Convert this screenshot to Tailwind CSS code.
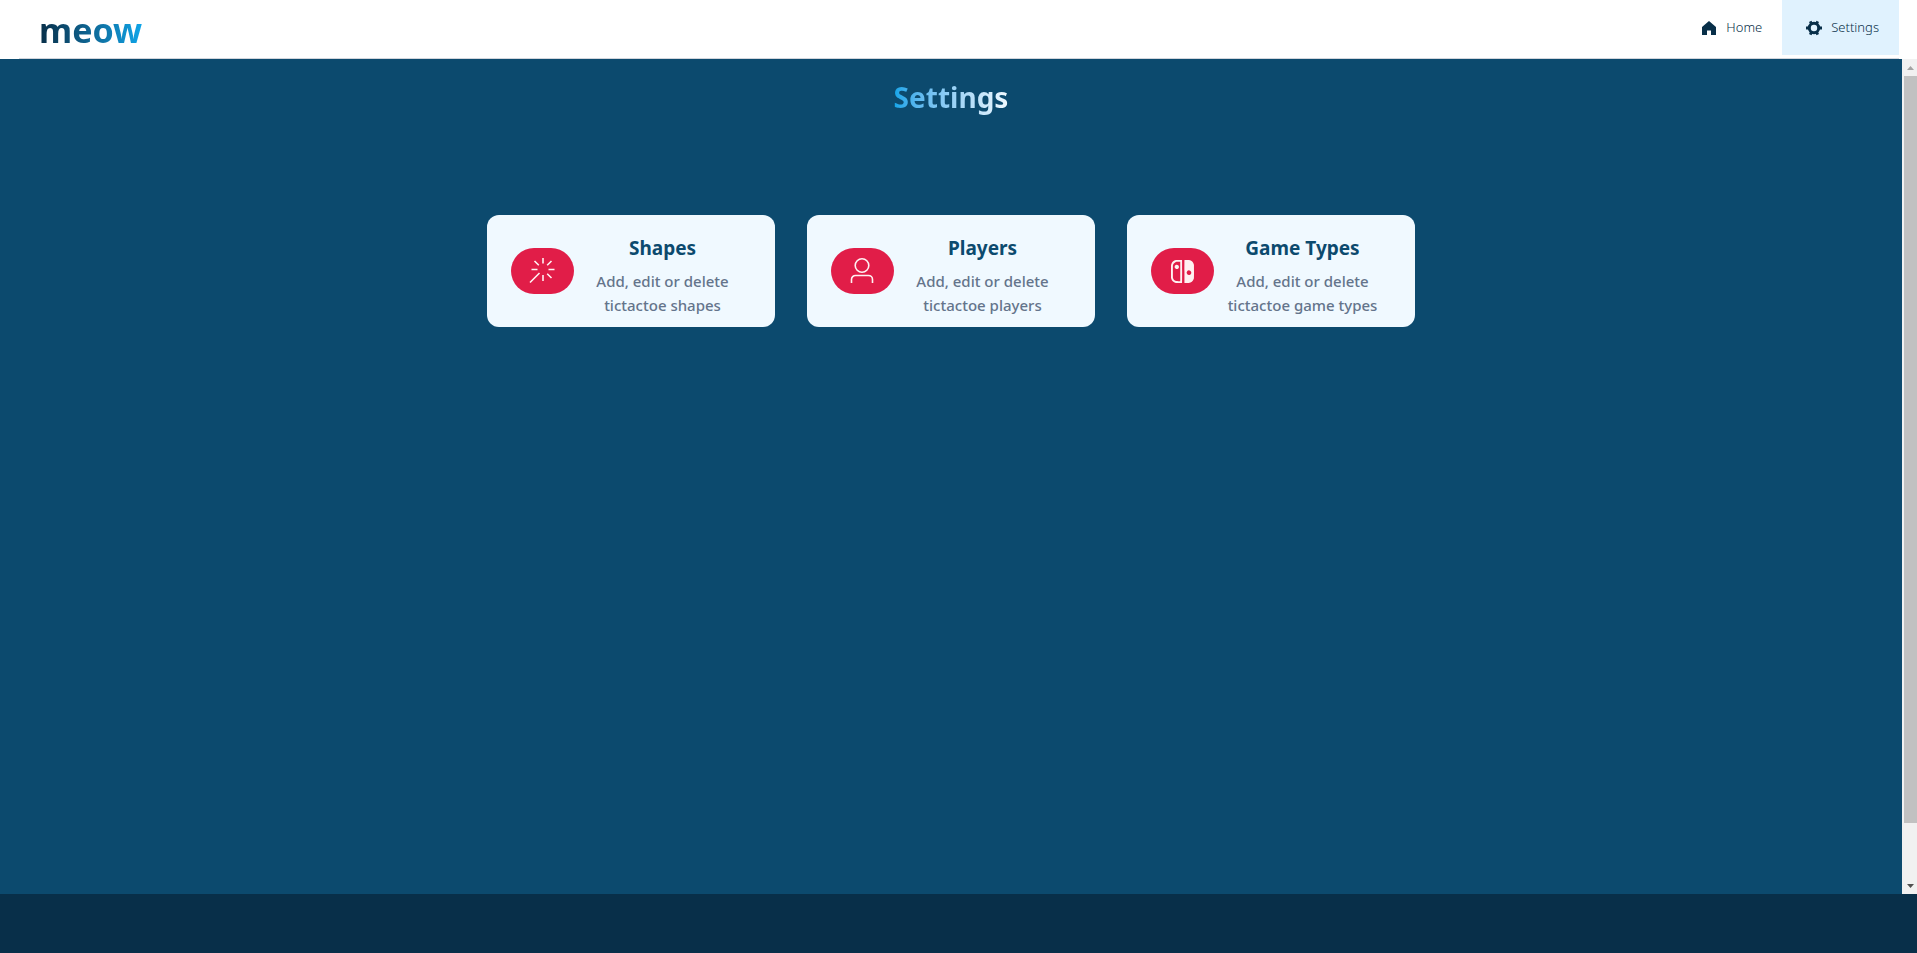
<!DOCTYPE html>
<html lang="en">
<head>
<meta charset="utf-8">
<title>meow - Settings</title>
<script src="https://cdn.jsdelivr.net/npm/@tailwindcss/browser@4"></script>
</head>
<body class="flex h-screen flex-col overflow-hidden bg-[#0c4a6e] font-['Segoe_UI','Noto_Sans',sans-serif]">
  <header class="shrink-0 bg-white pr-[18px] pl-[19px]">
    <div class="flex h-[59px] items-start justify-between border-b border-gray-300">
      <a href="#" class="ml-5 bg-linear-to-r from-[#082f49] to-[#0ea5e9] bg-clip-text pt-1 text-[34px] leading-[52px] font-bold text-transparent">meow</a>
      <nav class="flex h-[55px] text-[13px] font-light text-[#082f49]">
        <a href="#" class="flex items-center gap-[9px] pr-5 pl-6">
          <svg class="size-4" viewBox="0 0 16 16" fill="currentColor" aria-hidden="true"><path d="M8 1 1 7v8h5v-4.500h4V15h5V7z"/></svg>
          Home
        </a>
        <a href="#" class="flex items-center gap-[9px] bg-[#e0f2fe] pr-5 pl-6">
          <svg class="size-4" viewBox="0 0 16 16" aria-hidden="true"><circle cx="8" cy="8" r="4.700" fill="none" stroke="currentColor" stroke-width="3"/><path d="M13 8h3M10.500 12.300l1.300 2.400M5.500 12.300l-1.300 2.400M3 8H0M5.500 3.700 4.200 1.300M10.500 3.700l1.300-2.400" stroke="currentColor" stroke-width="2.800"/></svg>
          Settings
        </a>
      </nav>
    </div>
  </header>

  <div class="flex min-h-0 flex-1">
    <main class="flex flex-1 flex-col items-center pt-4">
      <h1 class="bg-linear-to-r from-[#0ea5e9] to-[#f0f9ff] bg-clip-text text-[28px] leading-[44px] font-bold text-transparent">Settings</h1>
      <div class="mt-24 grid grid-cols-[repeat(3,288px)] gap-8">
        <a href="#" class="flex h-28 items-center rounded-xl bg-[#f0f9ff] px-6">
          <span class="flex h-[46px] w-[63px] shrink-0 items-center justify-center rounded-full bg-[#e11d48] text-[#fff1f2]">
            <svg class="size-7" viewBox="0 0 28 28" fill="none" stroke="currentColor" stroke-width="1.600" aria-hidden="true"><path d="M14 1v5.500M14 18v6M2.500 12.500h6M19.500 12.500h6M5.500 4l4.300 4.300M22.500 4l-4.300 4.300M18.200 16.700 22.500 21M10.500 16 1 25.500"/></svg>
          </span>
          <span class="flex flex-1 flex-col gap-[7px] pt-2 text-center">
            <span class="text-[19px] leading-7 font-bold text-[#0c4a6e]">Shapes</span>
            <span class="text-[15px] leading-6 font-medium text-[#64748b]">Add, edit or delete tictactoe shapes</span>
          </span>
        </a>
        <a href="#" class="flex h-28 items-center rounded-xl bg-[#f0f9ff] px-6">
          <span class="flex h-[46px] w-[63px] shrink-0 items-center justify-center rounded-full bg-[#e11d48] text-[#fff1f2]">
            <svg class="size-7" viewBox="0 0 28 28" fill="none" stroke="currentColor" stroke-width="1.600" aria-hidden="true"><circle cx="13" cy="8.500" r="6.800"/><path d="M2.500 26v-3.500a4 4 0 0 1 4-4h13a4 4 0 0 1 4 4V26"/></svg>
          </span>
          <span class="flex flex-1 flex-col gap-[7px] pt-2 text-center">
            <span class="text-[19px] leading-7 font-bold text-[#0c4a6e]">Players</span>
            <span class="text-[15px] leading-6 font-medium text-[#64748b]">Add, edit or delete tictactoe players</span>
          </span>
        </a>
        <a href="#" class="flex h-28 items-center rounded-xl bg-[#f0f9ff] px-6">
          <span class="flex h-[46px] w-[63px] shrink-0 items-center justify-center rounded-full bg-[#e11d48] text-[#fff1f2]">
            <svg class="size-[23px]" viewBox="0 0 16 16" fill="currentColor" aria-hidden="true"><path d="M9.340 8.005c0-4.380.010-7.972.023-7.982C9.373.010 10.036 0 10.831 0c1.153 0 1.510.010 1.743.050 1.730.298 3.045 1.600 3.373 3.326.046.242.053.809.053 4.610 0 4.060.005 4.537-.123 4.976-.022.076-.048.150-.080.242a4.140 4.140 0 0 1-3.426 2.767c-.317.033-2.889.046-2.978.013-.050-.020-.053-.752-.053-7.979Zm4.675.269a1.621 1.621 0 0 0-1.113-1.034 1.609 1.609 0 0 0-1.938 1.073 1.900 1.900 0 0 0-.014.935 1.632 1.632 0 0 0 1.952 1.107c.510-.136.908-.504 1.110-1.028.110-.285.113-.742.003-1.053ZM3.710 3.317c-.208.040-.526.199-.695.348-.348.301-.520.729-.494 1.232.013.262.030.332.136.544.155.321.390.556.712.715.222.110.278.123.567.133.261.010.354 0 .530-.060.719-.242 1.153-.940 1.030-1.656-.142-.852-.950-1.422-1.786-1.256Z"/><path d="M3.425.053a4.136 4.136 0 0 0-3.280 3.015C0 3.628-.010 3.956.005 8.300c.010 3.990.014 4.082.080 4.390.368 1.660 1.548 2.844 3.224 3.235.220.050.497.060 2.290.070 1.856.012 2.048.009 2.097-.040.050-.050.053-.690.053-7.940 0-5.374-.010-7.906-.033-7.952-.033-.060-.090-.063-2.030-.060-1.578.004-2.052.014-2.260.050Zm3 14.665-1.350-.016c-1.242-.013-1.375-.020-1.623-.083a2.810 2.810 0 0 1-2.080-2.167c-.074-.335-.074-8.579-.004-8.907a2.845 2.845 0 0 1 1.716-2.050c.438-.176.640-.196 2.058-.200l1.282-.003v13.426Z"/></svg>
          </span>
          <span class="flex flex-1 flex-col gap-[7px] pt-2 text-center">
            <span class="text-[19px] leading-7 font-bold text-[#0c4a6e]">Game Types</span>
            <span class="text-[15px] leading-6 font-medium text-[#64748b]">Add, edit or delete tictactoe game types</span>
          </span>
        </a>
      </div>
    </main>
    <div class="flex w-[15px] shrink-0 flex-col bg-[#f1f1f1] pl-0.5" aria-hidden="true">
      <svg class="h-[17px] w-[13px] shrink-0" viewBox="0 0 13 17" fill="#a3a3a3"><path d="M3 11 6.500 7 10 11z"/></svg>
      <div class="w-full flex-[747] bg-[#c1c1c1]"></div>
      <div class="flex-[54]"></div>
      <svg class="h-[17px] w-[13px] shrink-0" viewBox="0 0 13 17" fill="#505050"><path d="M3 7h7L6.500 11z"/></svg>
    </div>
  </div>

  <footer class="h-[59px] shrink-0 bg-[#082f49]"></footer>
</body>
</html>
